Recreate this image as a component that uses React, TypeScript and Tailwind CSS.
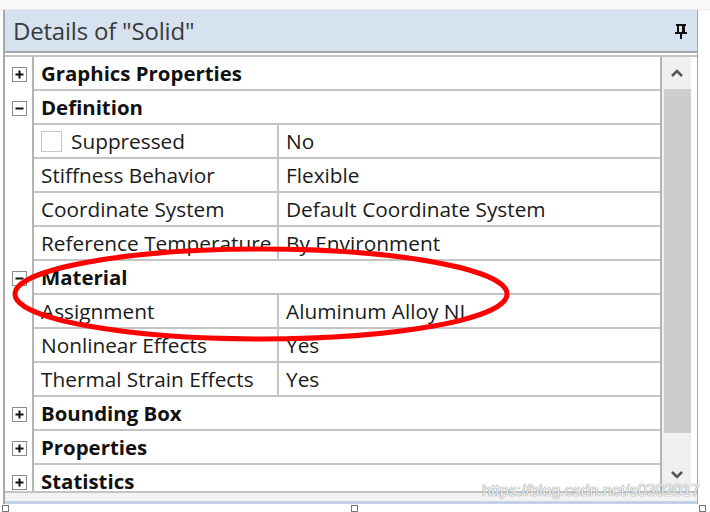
import React from 'react'

type Row =
  | { kind: 'cat'; label: string; open: boolean }
  | { kind: 'prop'; label: string; value: string; check?: boolean }

const rows: Row[] = [
  { kind: 'cat', label: 'Graphics Properties', open: false },
  { kind: 'cat', label: 'Definition', open: true },
  { kind: 'prop', label: 'Suppressed', value: 'No', check: true },
  { kind: 'prop', label: 'Stiffness Behavior', value: 'Flexible' },
  { kind: 'prop', label: 'Coordinate System', value: 'Default Coordinate System' },
  { kind: 'prop', label: 'Reference Temperature', value: 'By Environment' },
  { kind: 'cat', label: 'Material', open: true },
  { kind: 'prop', label: 'Assignment', value: 'Aluminum Alloy NL' },
  { kind: 'prop', label: 'Nonlinear Effects', value: 'Yes' },
  { kind: 'prop', label: 'Thermal Strain Effects', value: 'Yes' },
  { kind: 'cat', label: 'Bounding Box', open: false },
  { kind: 'cat', label: 'Properties', open: false },
  { kind: 'cat', label: 'Statistics', open: false },
]

function Toggle({ open }: { open: boolean }) {
  return (
    <div className="w-[15px] h-[15px] border border-[#8a8a8a] bg-white flex items-center justify-center">
      <svg width="11" height="11" viewBox="0 0 11 11">
        <rect x="1.5" y="4.5" width="8" height="2" fill="#111" />
        {!open && <rect x="4.5" y="1.5" width="2" height="8" fill="#111" />}
      </svg>
    </div>
  )
}

function PinIcon() {
  return (
    <svg width="16" height="16" viewBox="0 0 16 16">
      <rect x="3" y="1" width="10" height="2" fill="#111" />
      <rect x="4" y="3" width="2" height="6" fill="#111" />
      <rect x="9" y="3" width="3" height="6" fill="#111" />
      <rect x="2" y="9" width="12" height="2" fill="#111" />
      <rect x="7" y="11" width="2" height="5" fill="#111" />
    </svg>
  )
}

export default function App() {
  return (
    <div
      className="relative w-[710px] h-[512px] bg-white overflow-hidden text-[#1a1a1a]"
      style={{ fontFamily: '"Open Sans", "Noto Sans", sans-serif' }}
    >
      <div className="h-[10px] bg-[#f8f8f8] border-b border-[#ececec]" />
      <div className="ml-[3px] w-[695px] h-[494px] border-l-2 border-r border-[#a9a9a9] flex flex-col">
        {/* header */}
        <div className="h-[43px] shrink-0 bg-[#d6e2f0] border-b-2 border-[#a8a8a8] flex items-center justify-between pl-[8px] pr-[8px]">
          <span className="text-[24px] text-[#3a3a3a] leading-none tracking-[-0.2px]">Details of "Solid"</span>
          <PinIcon />
        </div>
        <div className="flex h-[438px] shrink-0 mt-[2px] border-t-2 border-b-2 border-[#c4c4c4] overflow-hidden">
          {/* gutter */}
          <div className="w-[29px] border-r-2 border-[#b4b4b4] flex flex-col">
            {rows.map((r, i) => (
              <div key={i} className="h-[34px] shrink-0 flex items-center pl-[7px]">
                {r.kind === 'cat' && <Toggle open={r.open} />}
              </div>
            ))}
          </div>
          {/* grid */}
          <div className="w-[626px] flex flex-col">
            {rows.map((r, i) => (
              <div key={i} className="h-[34px] shrink-0 border-b-2 border-[#c4c4c4] flex text-[20.8px] leading-none">
                {r.kind === 'cat' ? (
                  <div className="pl-[7px] flex items-center">
                    <span className="font-bold text-[20.4px] leading-[19px] text-[#111]">{r.label}</span>
                  </div>
                ) : (
                  <>
                    <div className="w-[245px] border-r-2 border-[#c4c4c4] pl-[7px] flex items-center gap-[9px] whitespace-nowrap overflow-hidden">
                      {r.check && <div className="w-[21px] h-[21px] border border-[#c8c8c8] bg-white shrink-0" />}
                      {r.label}
                    </div>
                    <div className="pl-[7px] flex items-center whitespace-nowrap">{r.value}</div>
                  </>
                )}
              </div>
            ))}
          </div>
          {/* scrollbar */}
          <div className="w-[31px] border-l-2 border-[#b4b4b4] bg-[#f0f0f0] flex flex-col items-center">
            <div className="h-[32px] shrink-0 w-full flex items-center justify-center">
              <svg width="14" height="10" viewBox="0 0 14 10">
                <path d="M2 8 L7 3 L12 8" stroke="#555" strokeWidth="2.6" fill="none" />
              </svg>
            </div>
            <div className="w-[27px] h-[344px] shrink-0 bg-[#cdcdcd] ml-[2px]" />
            <div className="flex-1" />
            <div className="h-[32px] shrink-0 w-full flex items-center justify-center">
              <svg width="14" height="10" viewBox="0 0 14 10">
                <path d="M2 2 L7 7 L12 2" stroke="#555" strokeWidth="2.6" fill="none" />
              </svg>
            </div>
          </div>
          <div className="flex-1 bg-white" />
        </div>
        <div className="flex-1 bg-[#f3f3f3] border-b-[3px] border-[#c3d2e4]" />
      </div>

      {/* selection handles */}
      <div className="absolute left-[2px] top-[505px] w-[7px] h-[7px] border border-[#777] bg-white" />
      <div className="absolute left-[351px] top-[505px] w-[7px] h-[7px] border border-[#777] bg-white" />
      <div className="absolute left-[699px] top-[505px] w-[7px] h-[7px] border border-[#777] bg-white" />

      {/* watermark */}
      <div
        className="absolute left-[482px] top-[483px] text-[16px] leading-none text-[#f2f2f2] whitespace-nowrap"
        style={{ fontFamily: '"Liberation Sans", Arial, sans-serif', textShadow: '0 0 1px #888, 0 0 1px #888' }}
      >
        https://blog.csdn.net/s0302017
      </div>

      {/* red annotation */}
      <svg className="absolute left-0 top-0 pointer-events-none" width="710" height="512">
        <ellipse cx="261" cy="294" rx="246" ry="45" fill="none" stroke="#f00" strokeWidth="5" />
      </svg>
    </div>
  )
}
